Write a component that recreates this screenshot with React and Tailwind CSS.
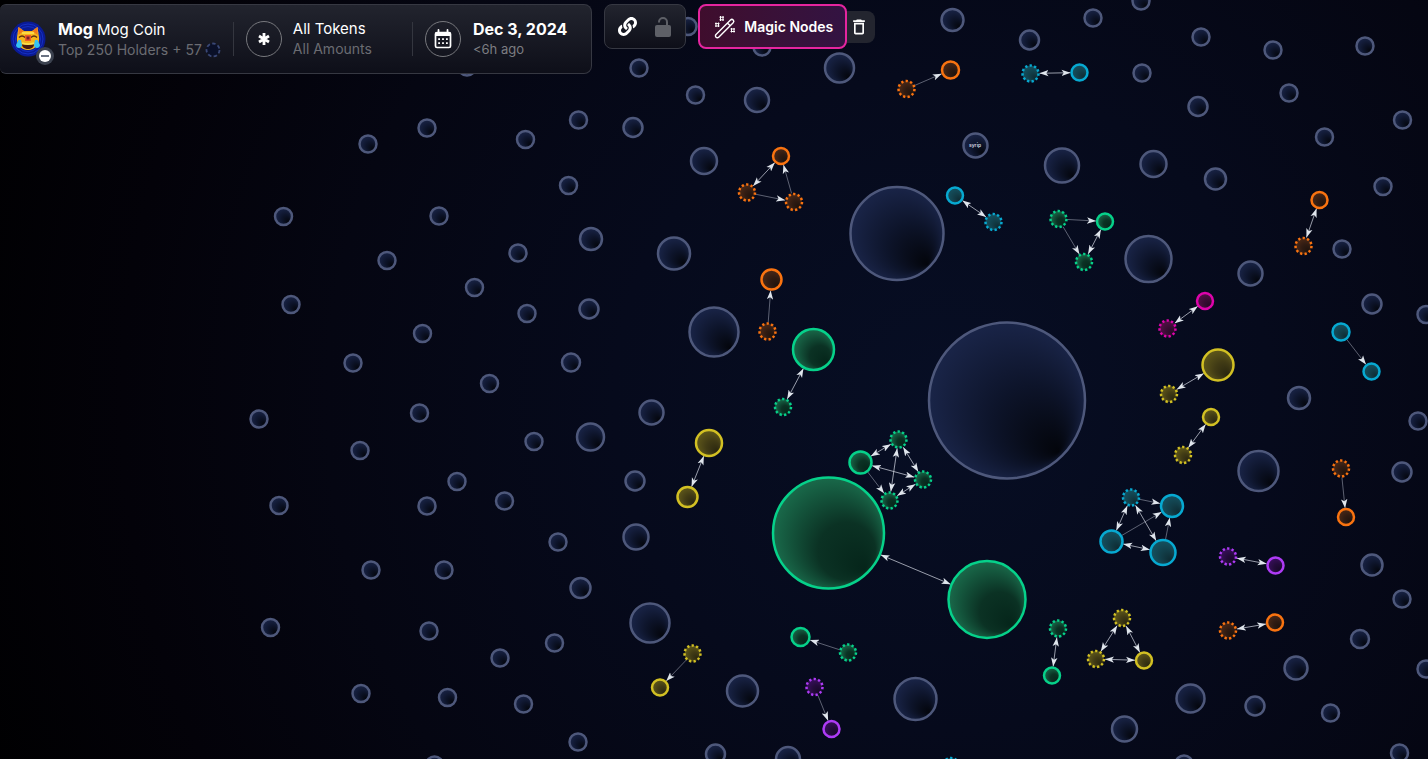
import { FaLink } from 'react-icons/fa';
import { MdDeleteOutline } from 'react-icons/md';

const COLORS = {
  navy: { stroke: '#4e587b', from: '#1a2549', mid: '#0d142a', to: '#03050b' },
  green: { stroke: '#06d18a', from: '#1a6c4c', mid: '#0b3224', to: '#05251a' },
  orange: { stroke: '#f97310', from: '#4d2a18', mid: '#2f1b12', to: '#1d120c' },
  cyan: { stroke: '#07a9d1', from: '#155362', mid: '#123f4a', to: '#0e2930' },
  yellow: { stroke: '#d2c023', from: '#615a1b', mid: '#413b15', to: '#29260f' },
  pink: { stroke: '#dd04ab', from: '#551048', mid: '#3a0c34', to: '#230a24' },
  purple: { stroke: '#ae3bf5', from: '#3b1060', mid: '#240b3b', to: '#150925' },
};

// x, y, radius of holders without any link
const SINGLES = [
  [1007, 400.5, 78], [897, 233.5, 46.5], [714, 332, 24.5], [1148.5, 259, 23],
  [674, 253.5, 16], [704, 161, 13], [839.5, 68, 14.5], [757, 100, 12],
  [952.5, 20, 11], [1029.5, 40, 9.5], [1093, 18, 8.5], [1141, 1, 8.5],
  [1201, 37, 8.5], [1273, 50, 8.5], [1365, 46, 8.5], [1142, 73, 8.5],
  [1198, 106.5, 9.5], [1289, 93, 8.5], [1402.5, 120, 8.5], [1324.5, 137, 8.5],
  [1062, 165.5, 17], [1153.5, 164, 13], [1215.5, 179, 10.5], [1383, 186.5, 8.5],
  [1342, 249, 8.5], [1250.5, 273.5, 12], [1372, 304, 9.5], [1426, 314.5, 8.5],
  [1299, 398, 11], [1418, 421, 8.5], [1258.5, 471, 20], [1402, 472, 9.5],
  [1372, 565, 10.5], [1402, 599, 8.5], [1360, 639, 9], [1296, 668, 11.5],
  [1426, 669, 8.5], [1330.5, 713, 8.5], [1399.5, 753, 8.5], [1255, 706, 9.5],
  [1190.5, 698.5, 14], [1124.5, 729, 12.5], [1184, 764, 8.5], [915.5, 699, 21],
  [742.5, 691, 15.5], [715.5, 754, 9.5], [788, 759, 12], [650, 623, 19.5],
  [580.5, 588, 10], [636, 537, 12.5], [635, 481, 9.5], [590.5, 437, 13.5],
  [651.5, 412.5, 12], [571, 362.5, 9], [589, 309, 9.5], [591, 239, 11],
  [568.5, 185.5, 8.5], [633, 127.5, 9.5], [695.5, 95, 8.5], [639, 68, 8.5],
  [688, 26.5, 8.5], [762, 47, 8.5], [578.5, 120, 8.5], [525.5, 139.5, 8.5],
  [427, 128, 8.5], [368, 144, 8.5], [467, 67, 8.5], [283.5, 216.5, 8.5],
  [439, 216, 8.5], [387, 260.5, 8.5], [518, 253, 8.5], [474.5, 287.5, 8.5],
  [291, 304.5, 8.5], [527, 313.5, 8.5], [422.5, 333.5, 8.5], [353, 363, 8.5],
  [489.5, 383.5, 8.5], [259, 419, 8.5], [419.5, 413, 8.5], [534, 441.5, 8.5],
  [360, 450.5, 8.5], [457, 481.5, 8.5], [279, 505.5, 8.5], [427, 506, 8.5],
  [504.5, 501, 8.5], [558, 542, 8.5], [371, 570, 8.5], [444, 570, 8.5],
  [270.5, 627.5, 8.5], [429, 631, 8.5], [500, 658, 8.5], [554.5, 643, 8.5],
  [361, 693.5, 8.5], [447.5, 697.5, 8.5], [523.5, 704, 8.5], [578, 742, 8.5],
  [434.5, 765, 8.5], [975.5, 145.5, 12],
];

// each cluster: nodes are [x, y, radius, dashed], links are [from, to, both ways]
const CLUSTERS = [
  { color: 'orange', nodes: [[906.5, 89, 8, 1], [950.5, 70, 8.5]], links: [[0, 1]] },
  { color: 'cyan', nodes: [[1030.5, 73.5, 8, 1], [1079.5, 72.5, 8]], links: [[0, 1, 1]] },
  { color: 'orange', nodes: [[781, 156, 8], [747, 192.5, 8, 1], [794, 202, 8, 1]], links: [[0, 1, 1], [1, 2], [2, 0]] },
  { color: 'cyan', nodes: [[955, 195.5, 8], [993.5, 222, 8, 1]], links: [[0, 1, 1]] },
  { color: 'green', nodes: [[1058.5, 219, 8, 1], [1105, 221.5, 8], [1084, 262, 8, 1]], links: [[0, 1], [0, 2], [1, 2, 1]] },
  { color: 'orange', nodes: [[1319.5, 200, 8], [1303.5, 246, 8, 1]], links: [[0, 1, 1]] },
  { color: 'pink', nodes: [[1205, 301, 8], [1167.5, 328.5, 8, 1]], links: [[0, 1, 1]] },
  { color: 'orange', nodes: [[767.5, 331.5, 8, 1], [771.5, 279.5, 10]], links: [[0, 1]] },
  { color: 'green', nodes: [[813.5, 349.5, 20.5], [783, 407, 8, 1]], links: [[0, 1, 1]] },
  { color: 'yellow', nodes: [[1218, 365, 15.5], [1169, 394, 8, 1]], links: [[0, 1, 1]] },
  { color: 'yellow', nodes: [[1211, 417, 8], [1183, 455, 8, 1]], links: [[0, 1, 1]] },
  { color: 'cyan', nodes: [[1341, 332, 8.5], [1371.5, 371.5, 8]], links: [[0, 1]] },
  { color: 'orange', nodes: [[1341, 468.5, 8, 1], [1346, 517, 8]], links: [[0, 1]] },
  { color: 'yellow', nodes: [[709, 443, 13], [687.5, 497, 10]], links: [[0, 1, 1]] },
  {
    color: 'green',
    nodes: [[898.5, 439.5, 8, 1], [860.5, 462.5, 11], [923, 479.5, 8, 1], [889.5, 500.5, 8, 1]],
    links: [[0, 1, 1], [0, 2, 1], [0, 3, 1], [1, 2, 1], [2, 3, 1], [1, 3]],
  },
  { color: 'green', nodes: [[828.5, 533, 55.5], [987, 599.5, 38.5]], links: [[0, 1, 1]] },
  {
    color: 'cyan',
    nodes: [[1131, 497.5, 8, 1], [1172, 506, 11], [1111.5, 541.5, 11], [1163, 552.5, 12.5]],
    links: [[0, 1], [0, 2, 1], [0, 3, 1], [2, 1], [2, 3, 1], [3, 1]],
  },
  { color: 'purple', nodes: [[1228, 556.5, 8, 1], [1275.5, 565.5, 8]], links: [[0, 1, 1]] },
  { color: 'orange', nodes: [[1228, 630.5, 8, 1], [1275, 622.5, 8]], links: [[0, 1, 1]] },
  { color: 'yellow', nodes: [[1122, 618, 8, 1], [1096, 659, 8, 1], [1144, 660.5, 8]], links: [[0, 1, 1], [0, 2, 1], [1, 2, 1]] },
  { color: 'green', nodes: [[1058, 628.5, 8, 1], [1052, 675.5, 8]], links: [[0, 1, 1]] },
  { color: 'green', nodes: [[848, 652.5, 8, 1], [800.5, 637, 9]], links: [[0, 1]] },
  { color: 'yellow', nodes: [[692.5, 653.5, 8, 1], [660, 687.5, 8]], links: [[0, 1]] },
  { color: 'purple', nodes: [[814.5, 687, 8, 1], [831.5, 729, 8]], links: [[0, 1]] },
  { color: 'cyan', nodes: [[951, 766, 8, 1]], links: [] },
];

function Bubble({ x, y, r, color, dashed }) {
  return (
    <circle
      cx={x}
      cy={y}
      r={r}
      fill={`url(#fill-${color})`}
      stroke={COLORS[color].stroke}
      strokeWidth={2.5}
      strokeDasharray={dashed ? '2.3 2.27' : undefined}
    />
  );
}

function Link({ from, to, both }) {
  const [x1, y1, r1] = from;
  const [x2, y2, r2] = to;
  const length = Math.hypot(x2 - x1, y2 - y1);
  const ux = (x2 - x1) / length;
  const uy = (y2 - y1) / length;

  return (
    <line
      x1={x1 + ux * (r1 + 1)}
      y1={y1 + uy * (r1 + 1)}
      x2={x2 - ux * (r2 + 1)}
      y2={y2 - uy * (r2 + 1)}
      stroke="#d5dae6"
      strokeOpacity={both ? 0.7 : 0.42}
      markerEnd="url(#arrow)"
      markerStart={both ? 'url(#arrow)' : undefined}
    />
  );
}

function BubbleMap() {
  return (
    <svg
      className="absolute inset-0 w-full h-full"
      viewBox="0 0 1428 759"
      preserveAspectRatio="xMidYMid slice"
      role="img"
      aria-label="Token holders"
    >
      <defs>
        {Object.entries(COLORS).map(([name, c]) => (
          <radialGradient key={name} id={`fill-${name}`} cx="0.5" cy="0.5" r="0.52" fx="0.83" fy="0.83">
            <stop offset="0" stopColor={c.to} />
            <stop offset="0.5" stopColor={c.mid} />
            <stop offset="1" stopColor={c.from} />
          </radialGradient>
        ))}
        <marker
          id="arrow"
          viewBox="0 0 9 7"
          refX="9"
          refY="3.5"
          markerWidth="9"
          markerHeight="7"
          markerUnits="userSpaceOnUse"
          orient="auto-start-reverse"
        >
          <path d="M9 3.500 0 0.300 2.200 3.500 0 6.700z" fill="#dfe5ec" />
        </marker>
      </defs>

      {SINGLES.map(([x, y, r]) => (
        <Bubble key={`${x}-${y}`} x={x} y={y} r={r} color="navy" />
      ))}
      <text x="975" y="147" textAnchor="middle" fill="#d3d6e0" className="font-['Inter',sans-serif] text-[5px] font-semibold">
        syrip
      </text>

      {CLUSTERS.map(({ color, nodes, links }, i) => (
        <g key={i}>
          {links.map(([a, b, both]) => (
            <Link key={`${a}-${b}`} from={nodes[a]} to={nodes[b]} both={both} />
          ))}
          {nodes.map(([x, y, r, dashed]) => (
            <Bubble key={`${x}-${y}`} x={x} y={y} r={r} color={color} dashed={dashed} />
          ))}
        </g>
      ))}
    </svg>
  );
}

function MogLogo() {
  return (
    <svg viewBox="0 0 36 36" className="w-9 h-9">
      <circle cx="18" cy="18" r="17.5" fill="#0a1a94" />
      <circle cx="18" cy="18" r="15" fill="none" stroke="#1530c4" />
      <circle cx="18" cy="18" r="12.5" fill="none" stroke="#1530c4" />
      <path d="M8.500 6 14 10h8l5.500-4L29 16c1 7-4 13-11 13S6 23 7 16z" fill="#f4b41c" />
      <path d="M8.500 6l5 4-5 4zM27.500 6l-5 4 5 4z" fill="#f0781c" />
      <path d="M12 12h12" stroke="#fbd844" strokeWidth="2" />
      <path d="M9 16.500c2-2 4-2 6 0M21 16.500c2-2 4-2 6 0" fill="none" stroke="#5c2c10" strokeWidth="1.4" />
      <path d="M15 14h6v6h-6z" fill="#ef5a28" />
      <path d="M16.500 15.500h3v3h-3z" fill="#7c1f2d" />
      <path d="M12 23.500h12c0 3-3 4.500-6 4.500s-6-1.500-6-4.500z" fill="#46190f" />
      <path d="M12 22c4 1.500 8 1.500 12 0" fill="none" stroke="#fbe04d" strokeWidth="1.5" />
      <path d="M8.500 19h2.500l1 5c0 4-6 4-6 0zM25 19h2.500l2.500 5c0 4-6 4-6 0z" fill="#35c3f3" />
    </svg>
  );
}

function CalendarIcon() {
  return (
    <svg viewBox="0 0 18 20" className="w-[18px] h-5">
      <path d="M4.500 1v3M13.500 1v3" stroke="white" strokeWidth="1.8" strokeLinecap="round" />
      <rect x="1.500" y="3.500" width="15" height="15" rx="1.500" fill="none" stroke="white" strokeWidth="1.7" />
      <path d="M1.500 3.500h15V7h-15z" fill="white" />
      <path
        d="M4.200 9.200h1.800v1.800H4.200zm3.900 0h1.800v1.800H8.100zm3.900 0h1.800v1.800H12zM4.200 13.200h1.800V15H4.200zm3.900 0h1.800V15H8.100zm3.900 0h1.800V15H12z"
        fill="white"
      />
    </svg>
  );
}

function UnlockIcon() {
  return (
    <svg viewBox="0 0 16 20" className="w-4 h-5">
      <rect y="8" width="16" height="12" rx="2" fill="#5e6067" />
      <path d="M4 5.500V5a4 4 0 0 1 8 0v4" fill="none" stroke="#5e6067" strokeWidth="2" />
    </svg>
  );
}

function WandIcon() {
  return (
    <svg viewBox="0 0 22 24" className="w-[22px] h-6" fill="none" stroke="white" strokeWidth="1.4">
      <path d="M2 19.500 16.500 5a1.900 1.900 0 0 1 2.700 2.700L4.700 22.200A1.900 1.900 0 0 1 2 19.500zM13.500 8l2.700 2.700" />
      <path d="M6.500 1v5M9 1v5M5.500 2.200h4.500M5.500 4.800h4.500" strokeWidth="1" />
      <path d="M2 7.500v4.500M4.500 7.500v4.500M1 8.600h4.500M1 11h4.500" strokeWidth="1" />
      <path d="M17.500 13v4.500M20 13v4.500M16.500 14H21M16.500 16.500H21" strokeWidth="1" />
    </svg>
  );
}

export default function App() {
  return (
    <main className="relative min-h-screen overflow-hidden bg-black bg-[radial-gradient(circle_at_66%_53%,#070e24_0%,#060a1c_32%,#050612_60%,#030209_80%,#000001_100%)] font-['Inter',sans-serif] text-white">
      <BubbleMap />

      <header className="relative flex items-start pt-1">
        <section className="flex items-center h-[70px] pl-2.5 pr-6 rounded-r-lg rounded-l-md border border-l-0 border-[#363842] bg-linear-to-b from-[#22242e] to-[#0e0f19]">
          <div className="relative shrink-0">
            <MogLogo />
            <span className="absolute -right-2 -bottom-2 flex items-center justify-center w-[18px] h-[18px] rounded-full bg-[#3c424f]">
              <span className="flex items-center justify-center w-3 h-3 rounded-full bg-white">
                <span className="w-2 h-0.5 bg-gray-500" />
              </span>
            </span>
          </div>
          <div className="ml-3 whitespace-nowrap">
            <h1 className="text-[15px] leading-5">
              <span className="text-base leading-5 font-bold">Mog</span> Mog Coin
            </h1>
            <p className="flex items-center gap-[3px] text-sm leading-5 text-[#6b6c72]">
              Top 250 Holders + 57
              <svg viewBox="0 0 16 16" className="w-4 h-4">
                <circle cx="8" cy="8" r="6.500" fill="#0a1028" stroke="#3a4876" strokeWidth="1.800" strokeDasharray="3.500 2.300" />
              </svg>
            </p>
          </div>

          <div className="w-px h-[34px] mx-3 bg-[#34363f]" />

          <button type="button" className="flex items-center gap-[11px] text-left whitespace-nowrap">
            <span className="flex items-center justify-center w-9 h-9 rounded-full border border-[#77787d]">
              <svg viewBox="0 0 12 12" className="w-3 h-3" stroke="white" strokeWidth="2.800">
                <path d="M6 0v12M1 3l10 6M11 3 1 9" />
              </svg>
            </span>
            <span>
              <span className="block text-[15px] leading-5">All Tokens</span>
              <span className="block text-sm leading-5 text-[#6b6c72]">All Amounts</span>
            </span>
          </button>

          <div className="w-px h-[34px] ml-10 mr-3 bg-[#34363f]" />

          <button type="button" className="flex items-center gap-3 text-left whitespace-nowrap">
            <span className="flex items-center justify-center w-9 h-9 rounded-full border border-[#77787d]">
              <CalendarIcon />
            </span>
            <span>
              <span className="block text-base leading-5 font-bold">Dec 3, 2024</span>
              <span className="block text-[13px] leading-5 text-[#7c7d82]">&lt;6h ago</span>
            </span>
          </button>
        </section>

        <div className="flex items-center gap-4 h-[45px] ml-3 px-3 rounded-lg border border-[#363842] bg-linear-to-b from-[#22242e] to-[#0e0f19]">
          <button type="button" aria-label="Copy link" className="w-5 flex justify-center">
            <FaLink className="w-[19px] h-[19px]" />
          </button>
          <button type="button" aria-label="Unlock" className="w-5 flex justify-center">
            <UnlockIcon />
          </button>
        </div>

        <div className="flex items-center ml-3">
          <button
            type="button"
            className="relative flex items-center gap-2 h-[45px] pl-3.5 pr-3 rounded-lg border-2 border-[#e5259f] bg-linear-to-r from-[#3f0d2d] to-[#331342] text-sm font-semibold whitespace-nowrap"
          >
            <WandIcon />
            Magic Nodes
          </button>
          <button
            type="button"
            aria-label="Clear magic nodes"
            className="flex items-center justify-end w-9 h-8 pr-1.5 -ml-2 rounded-lg bg-[#23252f]"
          >
            <MdDeleteOutline className="w-5 h-5" />
          </button>
        </div>
      </header>
    </main>
  );
}
